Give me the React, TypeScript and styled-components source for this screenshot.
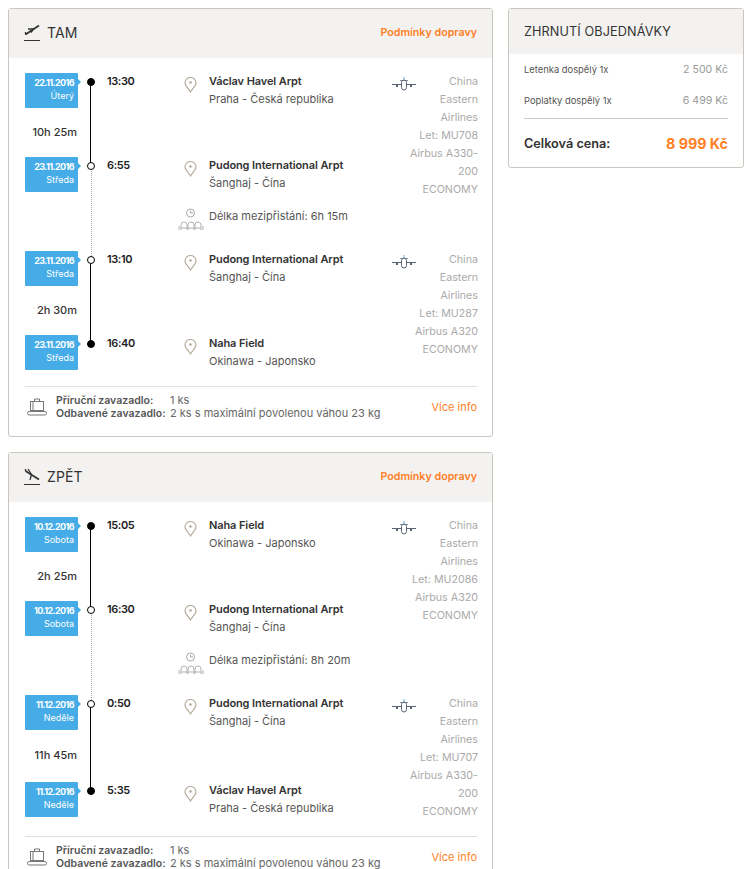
import React from "react";
import styled, { createGlobalStyle } from "styled-components";

const Global = createGlobalStyle`
  html, body { margin: 0; padding: 0; background: #fff; }
  body { font-family: Inter, "Open Sans", "Liberation Sans", sans-serif; color: #333; }
  * { box-sizing: border-box; }
`;

const Page = styled.div`
  display: flex;
  align-items: flex-start;
  gap: 15px;
  padding: 8px;
  width: 753px;
`;
const LeftColumn = styled.div`
  display: flex;
  flex-direction: column;
  gap: 15px;
  width: 485px;
  flex: none;
`;
const Card = styled.section`
  background: #fff;
  border: 1px solid #c9c6bf;
  border-radius: 3px;
`;
const Summary = styled(Card)`
  width: 236px;
  flex: none;
`;
const CardHeader = styled.header`
  display: flex;
  align-items: center;
  height: 49px;
  padding: 0 15px 2px 15px;
  background: #f4f2f0;
`;
const HeaderIcon = styled.svg`
  width: 16px;
  height: 18px;
  flex: none;
  margin-right: 7px;
  color: #333;
`;
const HeaderTitle = styled.h2<{ $small?: boolean }>`
  margin: ${(p) => (p.$small ? 0 : "-1px 0 0")};
  flex: 1;
  font-size: ${(p) => (p.$small ? 12.7 : 14)}px;
  font-weight: 400;
  letter-spacing: 0.1px;
  color: #333;
`;
const OrangeLink = styled.a<{ $bold?: boolean }>`
  color: #ff7f27;
  font-size: ${(p) => (p.$bold ? 10.7 : 11)}px;
  font-weight: ${(p) => (p.$bold ? 600 : 400)};
`;
const CardBody = styled.div`
  padding: 15px 15px 0 16px;
`;
const Segment = styled.div`
  position: relative;
  display: flex;
`;
const Stops = styled.div`
  flex: 1;
  min-width: 0;
`;
const StopRow = styled.div`
  display: grid;
  grid-template-columns: 53px 29px 77px 25px 1fr;
  height: 30px;
`;
const DateTag = styled.div`
  position: relative;
  background: #45ace8;
  color: #fff;
  text-align: right;
  padding: 3px 4px 0 0;
  border-radius: 1px;
  font-size: 9px;
  line-height: 13px;
  &::after {
    content: "";
    position: absolute;
    right: -3px;
    top: 6px;
    border-left: 3px solid #45ace8;
    border-top: 3px solid transparent;
    border-bottom: 3px solid transparent;
  }
`;
const DateText = styled.div`
  font-weight: 700;
  letter-spacing: -0.6px;
`;
const RailCell = styled.div`
  position: relative;
`;
const Dot = styled.span<{ $hollow?: boolean }>`
  position: absolute;
  left: 9px;
  top: 5px;
  width: 8px;
  height: 8px;
  border-radius: 50%;
  background: ${(p) => (p.$hollow ? "#fff" : "#000")};
  border: 1.5px solid #000;
  z-index: 2;
`;
const Time = styled.div`
  font-size: 11px;
  font-weight: 600;
  letter-spacing: -0.4px;
  line-height: 18px;
  color: #222;
  margin-top: -1px;
`;
const PinIcon = styled.svg`
  width: 13px;
  height: 16px;
  color: #b3a999;
  margin-top: 4px;
`;
const Place = styled.div`
  font-size: 11px;
  line-height: 18px;
  white-space: nowrap;
  margin-top: -1px;
`;
const PlaceName = styled.div`
  font-weight: 600;
  letter-spacing: -0.1px;
  color: #333;
`;
const PlaceArea = styled.div`
  color: #555;
`;
const BetweenRow = styled.div<{ $height: number }>`
  display: grid;
  grid-template-columns: 53px 29px 1fr;
  height: ${(p) => p.$height}px;
  align-items: center;
`;
const Duration = styled.div`
  font-size: 11px;
  font-weight: 500;
  color: #333;
  text-align: right;
  white-space: nowrap;
  margin: 3px 1px 0 -10px;
`;
const Connector = styled.span`
  position: absolute;
  left: 12px;
  top: -21px;
  bottom: -9px;
  width: 0;
  border-left: 1.5px solid #000;
`;
const DottedConnector = styled.span`
  position: absolute;
  left: 12.5px;
  top: -18px;
  bottom: -5px;
  width: 0;
  border-left: 1px dotted #aaa;
`;
const RailStretch = styled(RailCell)`
  align-self: stretch;
`;
const LayoverRow = styled.div`
  display: grid;
  grid-template-columns: 53px 29px 71px 31px 1fr;
  height: 64px;
  align-items: center;
`;
const LayoverIcon = styled.svg`
  width: 26px;
  height: 24px;
  color: #a9a9a9;
  margin-top: 1px;
`;
const LayoverText = styled.div`
  font-size: 11px;
  color: #555;
  white-space: nowrap;
  margin-top: -7px;
`;
const FlightInfo = styled.div`
  position: relative;
  width: 86px;
  flex: none;
  margin: 0 -1px -40px 0;
  text-align: right;
  white-space: nowrap;
  color: #aaa;
  font-size: 10.7px;
  line-height: 18px;
`;
const PlaneIcon = styled.svg`
  position: absolute;
  left: 0;
  top: 4px;
  width: 24px;
  height: 15px;
`;
const Baggage = styled.footer<{ $mt: number }>`
  display: flex;
  align-items: center;
  margin-top: ${(p) => p.$mt}px;
  border-top: 1px solid #e2dfd9;
  padding: 7px 0 16px 2px;
`;
const BagIcon = styled.svg`
  width: 20px;
  height: 18px;
  flex: none;
  margin-right: 9px;
  color: #777;
`;
const BagText = styled.div`
  flex: 1;
  font-size: 11px;
  line-height: 13px;
  color: #666;
`;
const BagLine = styled.div`
  display: grid;
  grid-template-columns: 114px 1fr;
  white-space: nowrap;
`;
const BagLabel = styled.span`
  font-size: 10.5px;
  font-weight: 600;
  color: #555;
`;
const SummaryHeader = styled(CardHeader)`
  height: 45px;
  padding-bottom: 0;
`;
const SummaryBody = styled.div`
  padding: 0 15px 0 15px;
`;
const PriceRow = styled.div`
  display: flex;
  justify-content: space-between;
  align-items: center;
  height: 31px;
`;
const PriceName = styled.span`
  font-size: 9.4px;
  color: #555;
`;
const PriceValue = styled.span`
  font-size: 10.6px;
  color: #999;
`;
const TotalRow = styled.div`
  display: flex;
  justify-content: space-between;
  align-items: center;
  margin-top: 2px;
  border-top: 1px solid #ccc;
  height: 49px;
`;
const TotalName = styled.span`
  font-size: 12.7px;
  font-weight: 600;
  color: #333;
`;
const TotalValue = styled.span`
  font-size: 14.3px;
  font-weight: 700;
  color: #ff7f27;
`;

const Takeoff = () => (
  <HeaderIcon viewBox="0 0 16 18" fill="none" stroke="currentColor">
    <path d="M1.500 10.500 15 1.500" strokeWidth="1.800" />
    <path d="M4 5H9.500L7 8.500M1.500 8V10.500" strokeWidth="1.300" />
    <path d="M0 16.500H16" strokeWidth="1" />
  </HeaderIcon>
);
const Landing = () => (
  <HeaderIcon viewBox="0 0 16 18" fill="none" stroke="currentColor">
    <path d="M1.500 3 15 11.500" strokeWidth="1.800" />
    <path d="M4 1 7.500 6.500 6 12M1.500 1V3" strokeWidth="1.300" />
    <path d="M0 16.500H16" strokeWidth="1" />
  </HeaderIcon>
);
const Pin = () => (
  <PinIcon viewBox="0 0 13 16" fill="none" stroke="currentColor" strokeWidth="1.100">
    <path d="M6.500 15C4.500 11.500 1 9 1 6a5.500 5.500 0 0 1 11 0c0 3-3.500 5.500-5.500 9Z" />
    <circle cx="6.500" cy="5.500" r="1.300" fill="currentColor" stroke="none" />
  </PinIcon>
);
const Plane = () => (
  <PlaneIcon viewBox="0 0 24 15" fill="none" stroke="#5a6472" strokeWidth="1">
    <path d="M0 7.500H24" />
    <rect x="9.500" y="3" width="5" height="10" rx="2.500" fill="#fff" />
    <path d="M12 0V3" stroke="#6aa9d8" />
    <path d="M8 3.500H16" strokeWidth=".7" />
    <path d="M5 8V10M19 8V10" strokeWidth="2" />
  </PlaneIcon>
);
const Layover = () => (
  <LayoverIcon viewBox="0 0 26 24" fill="none" stroke="currentColor" strokeWidth="1">
    <circle cx="12.500" cy="5" r="4" />
    <path d="M12.500 2.500V5H15" />
    <path d="M1 22V18M3 22V17a3 3 0 0 1 6 0v5M3 20H9M10 22V17a3 3 0 0 1 6 0v5M10 20H16M17 22V17a3 3 0 0 1 6 0v5M17 20H23M25 22V18" strokeWidth=".9" />
  </LayoverIcon>
);
const Bag = () => (
  <BagIcon viewBox="0 0 20 18" fill="none" stroke="currentColor" strokeWidth="1">
    <rect x="3.500" y="3.500" width="13" height="9" />
    <path d="M7.500 3.500V1H12.500V3.500M6 3.500V12.500" />
    <rect x=".5" y="13.500" width="19" height="3.500" rx="1.700" />
  </BagIcon>
);

type Stop = { date: string; day: string; time: string; name: string; area: string; hollow?: boolean };
type Leg = { from: Stop; to: Stop; duration: string; gap: number; info: string[] };
type Trip = { title: string; icon: React.ReactNode; legs: Leg[]; layover: string; footerGap: number };

const Stopline = ({ s }: { s: Stop }) => (
  <StopRow>
    <DateTag>
      <DateText>{s.date}</DateText>
      <div>{s.day}</div>
    </DateTag>
    <RailCell>
      <Dot $hollow={s.hollow} />
    </RailCell>
    <Time>{s.time}</Time>
    <div><Pin /></div>
    <Place>
      <PlaceName>{s.name}</PlaceName>
      <PlaceArea>{s.area}</PlaceArea>
    </Place>
  </StopRow>
);

const LegBlock = ({ leg }: { leg: Leg }) => (
  <Segment>
    <Stops>
      <Stopline s={leg.from} />
      <BetweenRow $height={leg.gap}>
        <Duration>{leg.duration}</Duration>
        <RailStretch><Connector /></RailStretch>
      </BetweenRow>
      <Stopline s={leg.to} />
    </Stops>
    <FlightInfo>
      <Plane />
      {leg.info.map((t) => (
        <div key={t}>{t}</div>
      ))}
    </FlightInfo>
  </Segment>
);

const prg = { name: "Václav Havel Arpt", area: "Praha - Česká republika" };
const pvg = { name: "Pudong International Arpt", area: "Šanghaj - Čína" };
const oka = { name: "Naha Field", area: "Okinawa - Japonsko" };

const trips: Trip[] = [
  {
    title: "TAM",
    icon: <Takeoff />,
    layover: "Délka mezipřistání: 6h 15m",
    footerGap: 21,
    legs: [
      {
        from: { date: "22.11.2016", day: "Úterý", time: "13:30", ...prg },
        to: { date: "23.11.2016", day: "Středa", time: "6:55", hollow: true, ...pvg },
        duration: "10h 25m",
        gap: 54,
        info: ["China", "Eastern", "Airlines", "Let: MU708", "Airbus A330-", "200", "ECONOMY"],
      },
      {
        from: { date: "23.11.2016", day: "Středa", time: "13:10", hollow: true, ...pvg },
        to: { date: "23.11.2016", day: "Středa", time: "16:40", ...oka },
        duration: "2h 30m",
        gap: 54,
        info: ["China", "Eastern", "Airlines", "Let: MU287", "Airbus A320", "ECONOMY"],
      },
    ],
  },
  {
    title: "ZPĚT",
    icon: <Landing />,
    layover: "Délka mezipřistání: 8h 20m",
    footerGap: 24,
    legs: [
      {
        from: { date: "10.12.2016", day: "Sobota", time: "15:05", ...oka },
        to: { date: "10.12.2016", day: "Sobota", time: "16:30", hollow: true, ...pvg },
        duration: "2h 25m",
        gap: 54,
        info: ["China", "Eastern", "Airlines", "Let: MU2086", "Airbus A320", "ECONOMY"],
      },
      {
        from: { date: "11.12.2016", day: "Neděle", time: "0:50", hollow: true, ...pvg },
        to: { date: "11.12.2016", day: "Neděle", time: "5:35", ...prg },
        duration: "11h 45m",
        gap: 57,
        info: ["China", "Eastern", "Airlines", "Let: MU707", "Airbus A330-", "200", "ECONOMY"],
      },
    ],
  },
];

export default function App() {
  return (
    <>
      <Global />
      <Page>
        <LeftColumn>
          {trips.map((t) => (
            <Card key={t.title}>
              <CardHeader>
                {t.icon}
                <HeaderTitle>{t.title}</HeaderTitle>
                <OrangeLink $bold>Podmínky dopravy</OrangeLink>
              </CardHeader>
              <CardBody>
                <LegBlock leg={t.legs[0]} />
                <LayoverRow>
                  <span />
                  <RailStretch><DottedConnector /></RailStretch>
                  <span />
                  <Layover />
                  <LayoverText>{t.layover}</LayoverText>
                </LayoverRow>
                <LegBlock leg={t.legs[1]} />
                <Baggage $mt={t.footerGap}>
                  <Bag />
                  <BagText>
                    <BagLine><BagLabel>Příruční zavazadlo:</BagLabel><span>1 ks</span></BagLine>
                    <BagLine><BagLabel>Odbavené zavazadlo:</BagLabel><span>2 ks s maximální povolenou váhou 23 kg</span></BagLine>
                  </BagText>
                  <OrangeLink>Více info</OrangeLink>
                </Baggage>
              </CardBody>
            </Card>
          ))}
        </LeftColumn>
        <Summary>
          <SummaryHeader>
            <HeaderTitle $small>ZHRNUTÍ OBJEDNÁVKY</HeaderTitle>
          </SummaryHeader>
          <SummaryBody>
            <PriceRow><PriceName>Letenka dospělý 1x</PriceName><PriceValue>2 500 Kč</PriceValue></PriceRow>
            <PriceRow><PriceName>Poplatky dospělý 1x</PriceName><PriceValue>6 499 Kč</PriceValue></PriceRow>
            <TotalRow><TotalName>Celková cena:</TotalName><TotalValue>8 999 Kč</TotalValue></TotalRow>
          </SummaryBody>
        </Summary>
      </Page>
    </>
  );
}
